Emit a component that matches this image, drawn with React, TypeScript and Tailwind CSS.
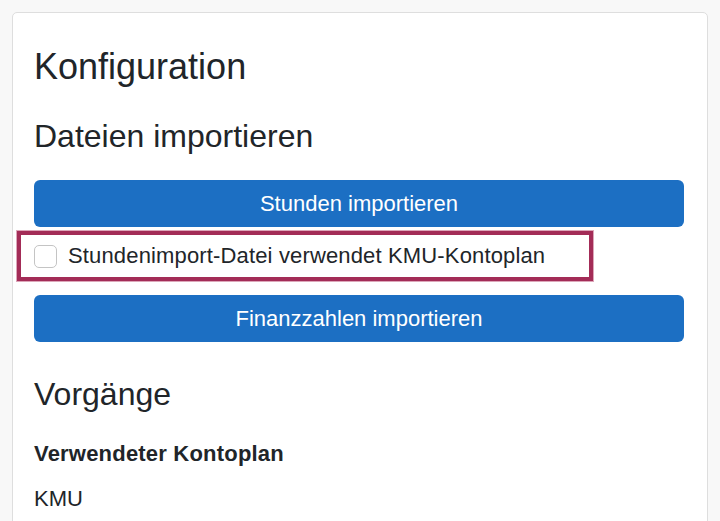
export default function App() {
  return (
    <div className="min-h-screen bg-[#f8f8f8] pt-3 font-['Liberation_Sans',Arial,sans-serif] text-[#212529]">
      {/* Configuration card */}
      <div className="ml-3 w-[696px] rounded-[5px] border border-[#dedede] bg-white pl-[21px] pr-[23px] pt-8 pb-10">
        <h2 className="text-[36px] leading-[43px] font-normal">Konfiguration</h2>

        <h3 className="mt-[29px] text-[32px] leading-[38px] font-normal">Dateien importieren</h3>

        <button className="mt-[25px] flex h-[47px] w-full items-center justify-center rounded-[6px] bg-[#1c6fc3] text-[22px] text-white">
          Stunden importieren
        </button>

        {/* highlighted option row */}
        <label className="-ml-[17px] mt-1 flex h-[50px] w-[576px] items-center gap-[11px] border-4 border-[#a32c57] pl-[13px] shadow-[0_0_0_1px_#dca6b9]">
          <span className="h-[23px] w-[23px] shrink-0 rounded-[5px] border border-[#c4c4c4] bg-white" />
          <span className="text-[22px] leading-none tracking-[0.15px]">Stundenimport-Datei verwendet KMU-Kontoplan</span>
        </label>

        <button className="mt-[14px] flex h-[47px] w-full items-center justify-center rounded-[6px] bg-[#1c6fc3] text-[22px] text-white">
          Finanzzahlen importieren
        </button>

        <h3 className="mt-[33px] text-[32px] leading-[38px] font-normal">Vorgänge</h3>

        <p className="mt-6 text-[22px] leading-[33px] font-bold tracking-[0.2px]">Verwendeter Kontoplan</p>
        <p className="mt-3 text-[22px] leading-[33px]">KMU</p>
      </div>
    </div>
  );
}
